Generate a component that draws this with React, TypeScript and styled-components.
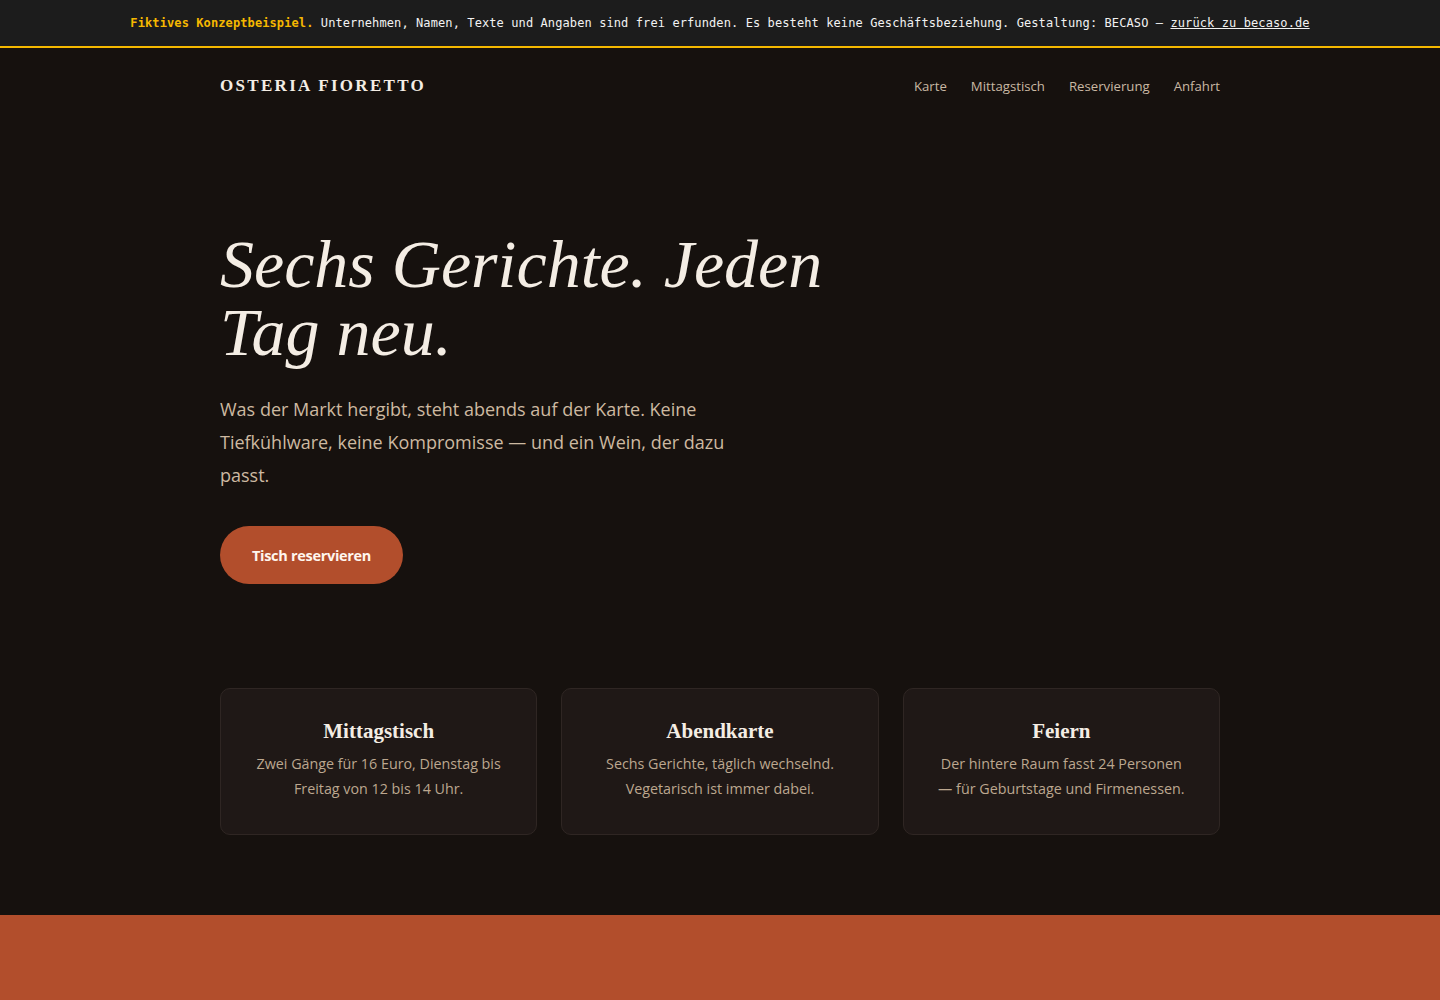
import React from 'react'
import styled, { createGlobalStyle } from 'styled-components'

const GlobalStyle = createGlobalStyle`
  html, body {
    margin: 0;
    padding: 0;
    background: #16110e;
  }
  * {
    box-sizing: border-box;
  }
`

const serif = `Georgia, "Liberation Serif", "DejaVu Serif", serif`
const sans = `"Open Sans", "Noto Sans", "Liberation Sans", sans-serif`

const Notice = styled.div`
  height: 48px;
  background: #1c1c1c;
  border-bottom: 2px solid #f5b800;
  display: flex;
  align-items: center;
  justify-content: center;
  font-family: "DejaVu Sans Mono", "Liberation Mono", monospace;
  font-size: 12px;
  letter-spacing: 0.1px;
  color: #f2f2f2;
  white-space: nowrap;

  strong {
    color: #f5b800;
  }
  a {
    color: #f2f2f2;
    text-decoration: underline;
  }
`

const Page = styled.div`
  min-height: 952px;
  background: #16110e;
  display: flex;
  flex-direction: column;
`

const Wrap = styled.div`
  width: 1000px;
  margin: 0 auto;
`

const Header = styled.header`
  height: 76px;
  display: flex;
  align-items: center;
  justify-content: space-between;
`

const Logo = styled.div`
  font-family: ${serif};
  font-weight: 700;
  font-size: 17px;
  letter-spacing: 2.3px;
  color: #f4ede4;
`

const Nav = styled.nav`
  display: flex;
  gap: 24px;

  a {
    font-family: ${sans};
    font-size: 13.2px;
    color: #c9b8a3;
    text-decoration: none;
  }
`

const Hero = styled.section`
  padding: 106px 0 104px;
`

const Title = styled.h1`
  margin: 0;
  max-width: 660px;
  font-family: ${serif};
  font-style: italic;
  font-weight: 400;
  font-size: 68px;
  line-height: 68px;
  color: #f4ede4;
`

const Lead = styled.p`
  margin: 27px 0 0;
  max-width: 520px;
  font-family: ${sans};
  font-size: 18px;
  line-height: 33px;
  color: #cdb9a1;
`

const CTA = styled.a`
  margin-top: 34px;
  display: inline-flex;
  align-items: center;
  justify-content: center;
  width: 183px;
  height: 58px;
  border-radius: 29px;
  background: #b24e2c;
  color: #fff6ee;
  font-family: ${sans};
  font-weight: 700;
  font-size: 14.5px;
  letter-spacing: -0.3px;
  text-decoration: none;
`

const Cards = styled.div`
  display: grid;
  grid-template-columns: repeat(3, 1fr);
  gap: 24px;
  padding-bottom: 80px;
`

const Card = styled.div`
  height: 147px;
  padding: 28px 32px;
  background: #1f1816;
  border: 1px solid #2f2623;
  border-radius: 10px;
  text-align: center;

  h3 {
    margin: 0;
    font-family: ${serif};
    font-weight: 700;
    font-size: 21px;
    line-height: 28px;
    color: #f4ede4;
  }
  p {
    margin: 6px 0 0;
    font-family: ${sans};
    font-size: 14.3px;
    line-height: 25px;
    color: #bca78f;
  }
`

const Band = styled.div`
  flex: 1;
  min-height: 85px;
  background: #b24e2c;
`

const cards = [
  {
    title: 'Mittagstisch',
    text: 'Zwei Gänge für 16 Euro, Dienstag bis Freitag von 12 bis 14 Uhr.',
  },
  {
    title: 'Abendkarte',
    text: 'Sechs Gerichte, täglich wechselnd. Vegetarisch ist immer dabei.',
  },
  {
    title: 'Feiern',
    text: 'Der hintere Raum fasst 24 Personen — für Geburtstage und Firmenessen.',
  },
]

const App: React.FC = () => {
  return (
    <>
      <GlobalStyle />
      <Notice>
        <strong>Fiktives Konzeptbeispiel.</strong>&nbsp;Unternehmen, Namen, Texte und Angaben sind frei
        erfunden. Es besteht keine Geschäftsbeziehung. Gestaltung: BECASO –&nbsp;
        <a href="#">zurück zu becaso.de</a>
      </Notice>
      <Page>
        <Wrap>
          <Header>
            <Logo>OSTERIA FIORETTO</Logo>
            <Nav>
              <a href="#">Karte</a>
              <a href="#">Mittagstisch</a>
              <a href="#">Reservierung</a>
              <a href="#">Anfahrt</a>
            </Nav>
          </Header>
          <Hero>
            <Title>Sechs Gerichte. Jeden Tag neu.</Title>
            <Lead>
              Was der Markt hergibt, steht abends auf der Karte. Keine Tiefkühlware, keine Kompromisse — und ein
              Wein, der dazu passt.
            </Lead>
            <CTA href="#">Tisch reservieren</CTA>
          </Hero>
          <Cards>
            {cards.map((c) => (
              <Card key={c.title}>
                <h3>{c.title}</h3>
                <p>{c.text}</p>
              </Card>
            ))}
          </Cards>
        </Wrap>
        <Band />
      </Page>
    </>
  )
}

export default App
